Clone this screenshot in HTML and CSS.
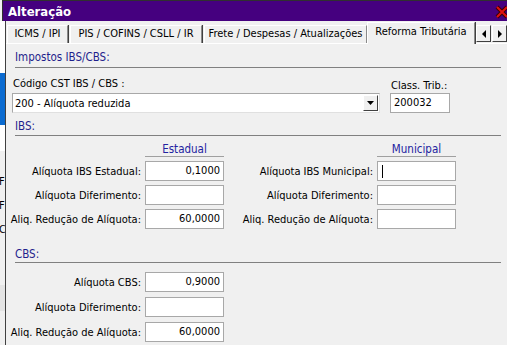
FILE: index.html
```html
<!DOCTYPE html>
<html lang="pt-BR">
<head>
    <meta charset="UTF-8">
    <title>Alteração</title>
    <link rel="stylesheet" href="styles.css">
</head>
<body>
    <div class="titlebar">
        <span class="title">Alteração</span>
        <svg class="close" width="16" height="14" viewBox="0 0 16 14">
            <path d="M2 2 L12 12 M12 2 L2 12" stroke="#3a0000" stroke-width="4"/>
            <path d="M2 2 L12 12 M12 2 L2 12" stroke="#e01010" stroke-width="2"/>
        </svg>
    </div>

    <div class="main">
        <div class="behind">
            <div class="bh-white"></div>
            <div class="bh-blue"></div>
            <div class="bh-white short"></div>
            <div class="bh-letters">
                <span>F</span>
                <span>F</span>
                <span>C</span>
            </div>
            <div class="bh-gray"></div>
        </div>

        <div class="form">
            <div class="tabs">
                <div class="tab t1">ICMS / IPI</div>
                <div class="tab t2">PIS / COFINS / CSLL / IR</div>
                <div class="tab t3">Frete / Despesas / Atualizações</div>
                <div class="tab active">Reforma Tributária</div>
                <div class="scroller">
                    <span class="arrow">
                        <svg width="6" height="8" viewBox="0 0 6 8"><path d="M5 0 L5 8 L1 4 Z" fill="#000"/></svg>
                    </span>
                    <span class="arrow">
                        <svg width="6" height="8" viewBox="0 0 6 8"><path d="M1 0 L1 8 L5 4 Z" fill="#000"/></svg>
                    </span>
                </div>
            </div>

            <div class="panel">
                <div class="section-title first">Impostos IBS/CBS:</div>

                <div class="cst-row">
                    <div class="cst-col">
                        <label class="caption">Código CST IBS / CBS :</label>
                        <div class="select">
                            <span>200 - Alíquota reduzida</span>
                            <span class="drop">
                                <svg width="7" height="4" viewBox="0 0 7 4"><path d="M0 0 L7 0 L3.5 4 Z" fill="#000"/></svg>
                            </span>
                        </div>
                    </div>
                    <div class="class-col">
                        <label class="caption">Class. Trib.:</label>
                        <div class="field left">200032</div>
                    </div>
                </div>

                <div class="section-title">IBS:</div>

                <div class="grid ibs">
                    <div></div>
                    <div class="col-head">Estadual</div>
                    <div></div>
                    <div class="col-head">Municipal</div>

                    <label>Alíquota IBS Estadual:</label>
                    <div class="field">0,1000</div>
                    <label>Alíquota IBS Municipal:</label>
                    <div class="field left"><span class="caret"></span></div>

                    <label>Alíquota Diferimento:</label>
                    <div class="field"></div>
                    <label>Alíquota Diferimento:</label>
                    <div class="field"></div>

                    <label>Aliq. Redução de Alíquota:</label>
                    <div class="field">60,0000</div>
                    <label>Aliq. Redução de Alíquota:</label>
                    <div class="field"></div>
                </div>

                <div class="section-title cbs">CBS:</div>

                <div class="grid cbs-grid">
                    <label>Alíquota CBS:</label>
                    <div class="field">0,9000</div>

                    <label>Alíquota Diferimento:</label>
                    <div class="field"></div>

                    <label>Aliq. Redução de Alíquota:</label>
                    <div class="field">60,0000</div>
                </div>
            </div>
        </div>
    </div>
</body>
</html>
```

FILE: styles.css
```css
* {
    margin: 0;
    padding: 0;
    box-sizing: border-box;
}

body {
    width: 507px;
    height: 345px;
    overflow: hidden;
    background: #f0f0f0;
    font-family: "DejaVu Sans Condensed", "DejaVu Sans", sans-serif;
    font-size: 11px;
    color: #000;
}

/* window title */
.titlebar {
    height: 21px;
    margin-left: 2px;
    border-top: 1px solid #303030;
    border-left: 1px solid #303030;
    background: #45007f;
    display: flex;
    align-items: center;
    justify-content: space-between;
    overflow: hidden;
}

.title {
    color: #fff;
    font-weight: bold;
    font-size: 13px;
    padding-left: 5px;
    padding-top: 1px;
}

.close {
    margin-right: -4px;
    margin-top: 2px;
}

.main {
    display: flex;
    height: 324px;
}

/* piece of the window behind */
.behind {
    width: 5px;
    overflow: hidden;
    background: #f0f0f0;
    display: flex;
    flex-direction: column;
}

.bh-white {
    height: 52px;
    background: #fff;
}

.bh-white.short {
    height: 26px;
}

.bh-blue {
    height: 52px;
    background: #0b6bd0;
}

.bh-letters {
    height: 134px;
    display: flex;
    flex-direction: column;
    gap: 10px;
    padding-top: 24px;
    line-height: 14px;
    margin-left: -1px;
}

.bh-gray {
    height: 26px;
    background: #e4e4e4;
}

.form {
    flex: 1;
    border-left: 1px solid #404040;
    display: flex;
    flex-direction: column;
}

/* tab strip */
.tabs {
    height: 22px;
    display: flex;
    align-items: flex-end;
    padding-left: 1px;
    border-bottom: 1px solid #fff;
    margin-top: 1px;
}

.tab {
    height: 18px;
    line-height: 16px;
    text-align: center;
    border-top: 1px solid #fff;
    border-left: 1px solid #fff;
    border-right: 1px solid #8a8a8a;
    box-shadow: 1px 0 0 #404040;
    margin-right: 2px;
    white-space: nowrap;
}

.t1 { width: 61px; }
.t2 { width: 132px; }
.t3 { width: 163px; margin-right: 0; }

.tab.active {
    width: 108px;
    height: 22px;
    line-height: 17px;
    margin-bottom: -1px;
    background: #f0f0f0;
    margin-right: 0;
}

.scroller {
    display: flex;
    gap: 1px;
    margin-left: 1px;
    margin-bottom: 1px;
}

.arrow {
    width: 15px;
    height: 17px;
    display: flex;
    align-items: center;
    justify-content: center;
    background: #f0f0f0;
    border-top: 1px solid #fff;
    border-left: 1px solid #fff;
    border-right: 1px solid #404040;
    border-bottom: 1px solid #404040;
}

/* page contents */
.panel {
    flex: 1;
    padding-top: 6px;
}

.section-title {
    margin-left: 9px;
    margin-right: 6px;
    line-height: 14px;
    padding-bottom: 2px;
    border-bottom: 1px solid #808080;
    color: #1f1f8c;
    font-size: 11.5px;
}

.section-title.first {
    padding-bottom: 3px;
}

.cst-row {
    display: flex;
    align-items: flex-end;
    gap: 10px;
    margin-left: 6px;
    margin-top: 9px;
}

.cst-col,
.class-col {
    display: flex;
    flex-direction: column;
}

.caption {
    line-height: 14px;
    padding-left: 1px;
    margin-bottom: 2px;
}

.class-col .caption {
    margin-bottom: 0;
}

.select {
    width: 368px;
    height: 20px;
    background: #fff;
    border: 1px solid #a8a8a8;
    border-right-color: #e0e0e0;
    border-bottom-color: #e0e0e0;
    display: flex;
    align-items: center;
    justify-content: space-between;
    padding-left: 2px;
    padding-right: 1px;
}

.drop {
    width: 15px;
    height: 16px;
    background: #f0f0f0;
    border-top: 1px solid #fff;
    border-left: 1px solid #fff;
    border-right: 1px solid #404040;
    border-bottom: 1px solid #404040;
    display: flex;
    align-items: center;
    justify-content: center;
}

.class-col .field {
    width: 60px;
}

.section-title + .grid,
.cst-row + .section-title {
    margin-top: 6px;
}

.grid {
    display: grid;
    grid-template-columns: 135px 79px 145px 79px;
    column-gap: 4px;
    row-gap: 4px;
    grid-auto-rows: 20px;
}

.ibs {
    grid-template-rows: 15px;
}

.grid label {
    text-align: right;
    align-self: center;
    white-space: nowrap;
}

.col-head {
    text-align: center;
    color: #2323a0;
    font-size: 11.5px;
    line-height: 14px;
    border-bottom: 1px solid #a0a0a0;
}

.field {
    height: 20px;
    background: #fff;
    border: 1px solid #a8a8a8;
    text-align: right;
    padding: 0 3px;
    line-height: 18px;
}

.field.left {
    text-align: left;
}

.caret {
    display: inline-block;
    width: 1px;
    height: 13px;
    background: #000;
    vertical-align: middle;
    margin-left: 1px;
}

.section-title.cbs {
    margin-top: 18px;
    padding-bottom: 1px;
}

.section-title + .cbs-grid {
    margin-top: 9px;
    grid-template-columns: 135px 79px;
    row-gap: 5px;
}
```
